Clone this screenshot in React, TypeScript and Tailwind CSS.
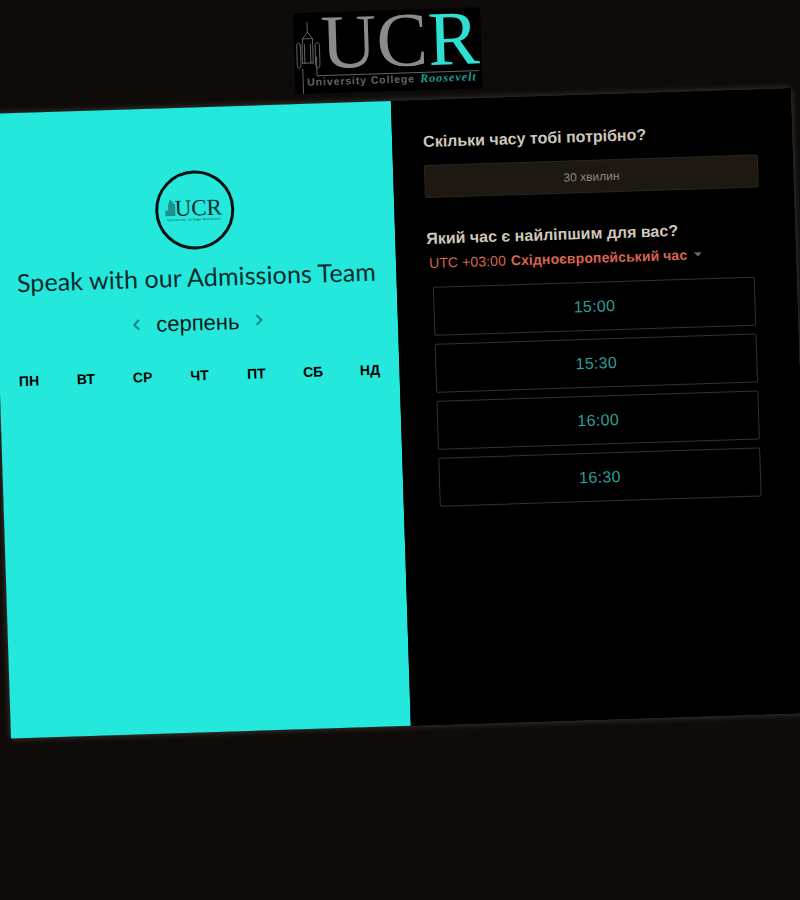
import React from "react";
import { ChevronLeft, ChevronRight } from "lucide-react";

const days = ["ПН", "ВТ", "СР", "ЧТ", "ПТ", "СБ", "НД"];
const slots = ["15:00", "15:30", "16:00", "16:30"];

const Logo = () => (
  <svg viewBox="0 -10 187 91" className="mt-[-10px] h-[91px] w-[187px] overflow-visible">
    <rect width="187" height="81" fill="#000" />
    <g transform="translate(-3,1) scale(0.3333)" fill="none" stroke="#6f7072" strokeWidth="2.6">
      <path d="M50 25V55M50 55L35 75V90M50 55L65 75V90M35 75H65" />
      <path d="M17 97C17 84 28 84 28 97V150C28 168 17 168 17 150ZM72 97C72 84 85 84 85 97V150C85 168 72 168 72 150Z" />
      <path d="M33 90V150M40 90V150M58 90V150M65 90V150M33 148H65M33 165V240M75 130V187H560" />
    </g>
    <text x="27" y="56" fontFamily="Liberation Serif, serif" fontSize="77" fill="#8b8b89">
      UC
      <tspan fill="#2ee0d4">R</tspan>
    </text>
    <text x="12" y="73" fontFamily="Liberation Sans, sans-serif" fontSize="10.5" fontWeight="700" letterSpacing="0.9" fill="#646463">
      University College
    </text>
    <text x="125" y="73" fontFamily="Liberation Serif, serif" fontSize="12" fontStyle="italic" fontWeight="700" letterSpacing="1.05" fill="#1c9c94">
      Roosevelt
    </text>
  </svg>
);

const SmallLogo = () => (
  <svg viewBox="0 0 72 40" className="h-[40px] w-[72px] overflow-visible">
    <path d="M12 8L10 14V19L7 20V25H17V14Z" fill="#1f8f8c" />
    <text x="16.5" y="25" fontFamily="Liberation Serif, serif" fontSize="23" fill="#042f30">
      UCR
    </text>
    <text x="9" y="30" fontFamily="Liberation Sans, sans-serif" fontSize="3.2" fontWeight="700" letterSpacing="0.35" fill="#1a6f6c">
      University College Roosevelt
    </text>
  </svg>
);

export default function App() {
  return (
    <div className="h-[900px] w-[800px] overflow-hidden bg-[#0f0b08]">
      <div className="flex h-[900px] w-[800px] rotate-[-1.83deg] flex-col items-center pt-[10px] font-['Liberation_Sans',sans-serif]">
        <Logo />
        <div className="mt-[10px] ml-[4px] flex h-[625px] w-[800px] shrink-0 shadow-[0_0_7px_rgba(255,255,255,0.22)]">
          <div className="flex w-[400px] flex-col items-center bg-[#24e8dc] pt-[63px] text-black">
            <div className="flex h-[79px] w-[79px] items-center justify-center rounded-full border-[3px] border-[#050f10]">
              <SmallLogo />
            </div>
            <h1 className="mt-[12px] font-['Lato',sans-serif] text-[25px] leading-[30px] tracking-[0.1px] text-[#062a2c]">
              Speak with our Admissions Team
            </h1>
            <div className="mt-[18px] flex items-center gap-[11px]">
              <ChevronLeft size={17} strokeWidth={3} className="mb-[2px] text-[#118a86]" />
              <span className="text-[22px] leading-[28px] text-[#061819]">серпень</span>
              <ChevronRight size={17} strokeWidth={3} className="mb-[4px] text-[#118a86]" />
            </div>
            <div className="mt-[30px] grid w-full grid-cols-7 px-[1px] text-center text-[14px] leading-[16px] font-bold">
              {days.map((d) => (
                <span key={d}>{d}</span>
              ))}
            </div>
          </div>
          <div className="flex w-[400px] flex-col bg-black pl-[31px] text-[#cfc7bb]">
            <h2 className="mt-[32px] text-[16px] leading-[20px] font-bold">Скільки часу тобі потрібно?</h2>
            <div className="mt-[13px] flex h-[33px] w-[334px] items-center justify-center rounded-[2px] border border-[#2b261f] bg-[#1d1812] text-[12px] text-[#8f8678]">
              30 хвилин
            </div>
            <h2 className="mt-[31px] text-[16px] leading-[20px] font-bold">Який час є найліпшим для вас?</h2>
            <div className="mt-[4px] flex items-center text-[14px] leading-[20px] tracking-[0.1px] text-[#d9644f]">
              <span className="ml-[2px]">UTC +03:00</span>
              <span className="ml-[5px] font-bold">Східноєвропейський час</span>
              <span className="ml-[7px] h-0 w-0 border-x-[4px] border-t-[4px] border-x-transparent border-t-[#6f6a63]" />
            </div>
            <div className="mt-[14px] ml-[5px] flex w-[322px] flex-col gap-[8px]">
              {slots.map((s) => (
                <div
                  key={s}
                  className="flex h-[49px] items-center justify-center rounded-[2px] border border-[#33322f] text-[16px] tracking-[0.3px] text-[#2a9e97]"
                >
                  {s}
                </div>
              ))}
            </div>
          </div>
        </div>
      </div>
    </div>
  );
}
